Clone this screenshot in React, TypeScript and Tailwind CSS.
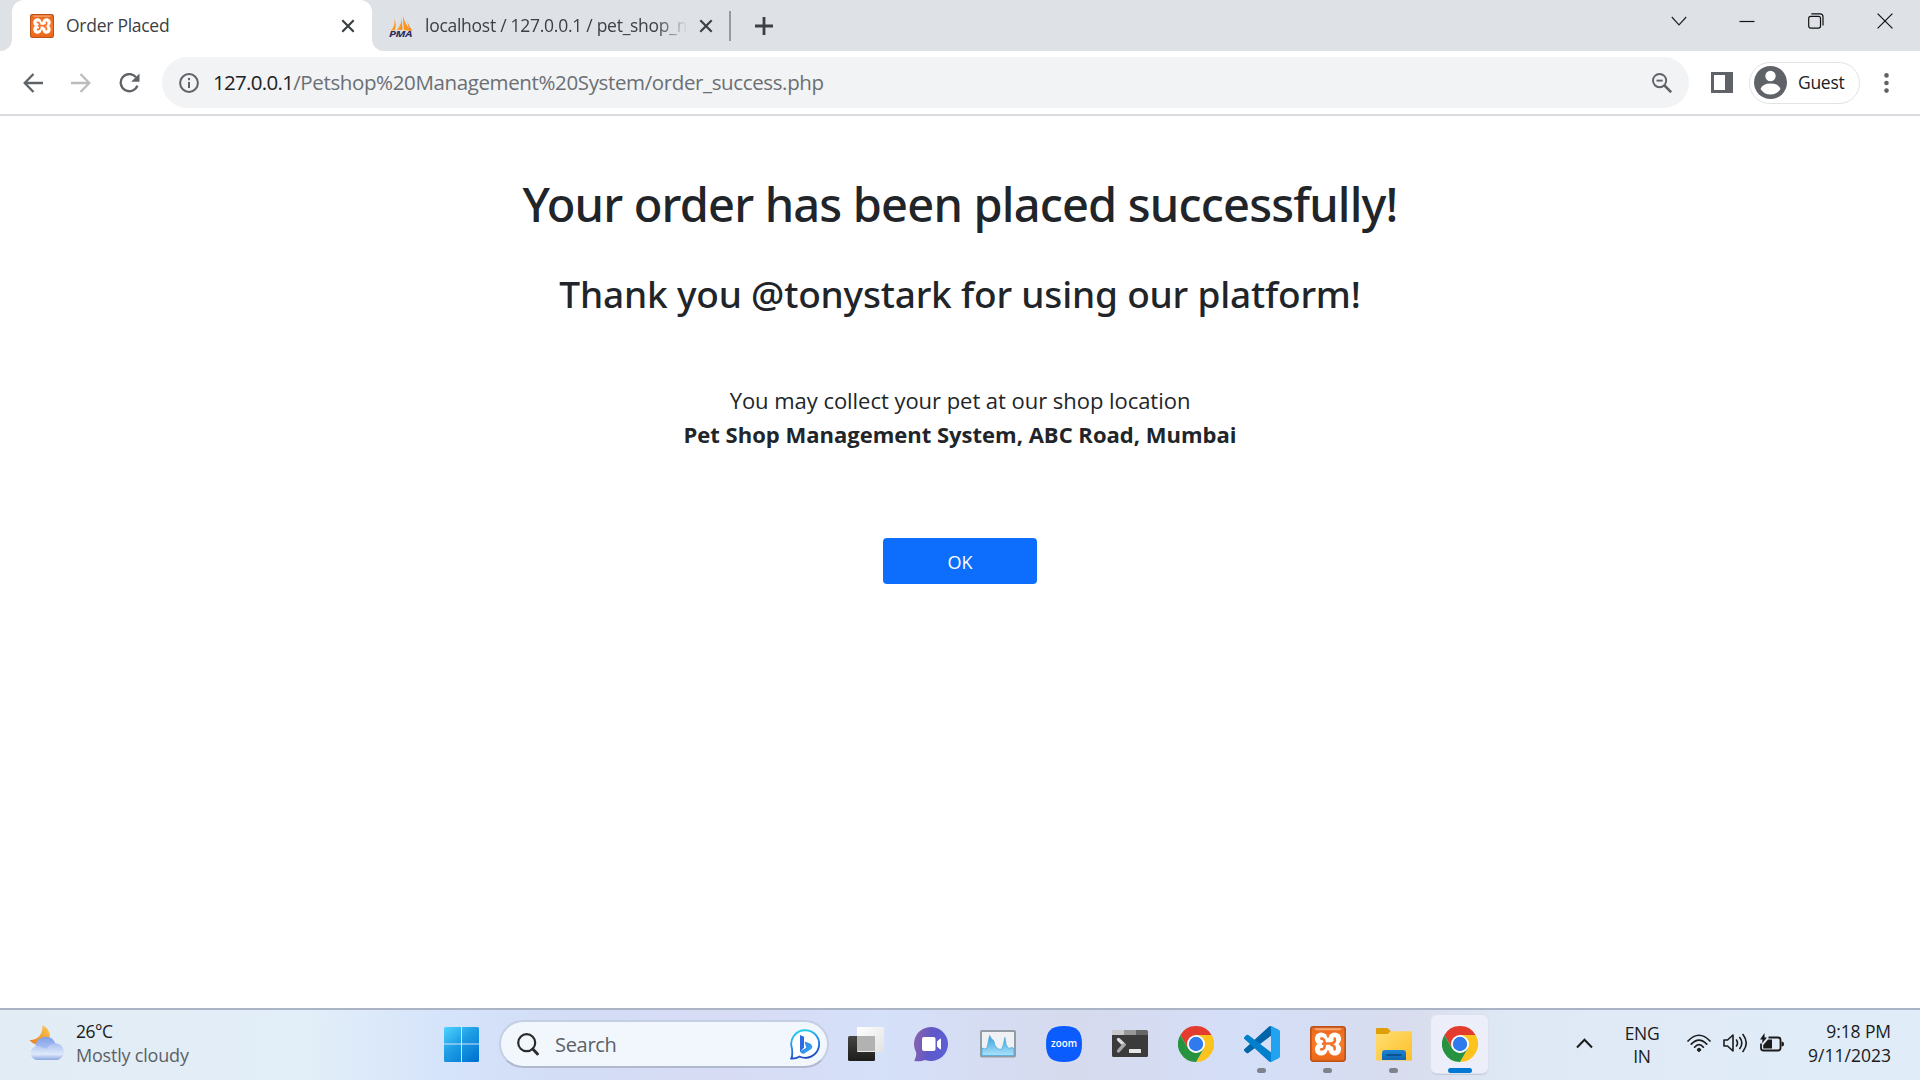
import React from "react";

const XamppIcon = ({ size, id }: { size: number; id: string }) => (
  <svg width={size} height={size} viewBox="0 0 36 36">
    <defs>
      <linearGradient id={id} x1="0" y1="0" x2="0" y2="1">
        <stop offset="0" stopColor="#e8681f" />
        <stop offset="0.5" stopColor="#fb7a24" />
        <stop offset="1" stopColor="#e9661a" />
      </linearGradient>
    </defs>
    <rect x="0.8" y="0.8" width="34.4" height="34.4" rx="2.6" fill={`url(#${id})`} stroke="#b9531a" strokeWidth="1.6" />
    <path d="M4 2.2h28l-2 2H6z" fill="#f7b98d" opacity="0.8" />
    <g fill="#fff">
      <circle cx="11.2" cy="12.8" r="6.3" />
      <circle cx="24.8" cy="12.8" r="6.3" />
      <circle cx="11.2" cy="23.2" r="6.3" />
      <circle cx="24.8" cy="23.2" r="6.3" />
      <rect x="9" y="11.5" width="18" height="13" />
    </g>
    <g stroke="#f5742a" strokeWidth="2.6" strokeLinecap="round" fill="none">
      <path d="M11.3 12.6q3.4 0 3.2 3.6M11.3 23.4q3.6 0 3.4-4M24.7 12.6q1 4-2.6 4.6M21.4 19q3.8.6 3.2 4.4M13 17.8l10-.6" />
      <path d="M18 8.6v2M18 25.4v2" strokeWidth="1.8" />
    </g>
  </svg>
);

const PmaIcon = () => (
  <svg width="24" height="24" viewBox="0 0 24 24" className="shrink-0 overflow-visible">
    <defs>
      <linearGradient id="sail" x1="0" y1="0" x2="1" y2="0.3">
        <stop offset="0" stopColor="#ffd9a4" />
        <stop offset="1" stopColor="#f98b12" />
      </linearGradient>
    </defs>
    <path d="M5.2 4.5C6 9 5.5 13 1.2 16.8l4.6-.6C7.2 12 6.8 8 5.2 4.5z" fill="url(#sail)" />
    <path d="M12.6.5C13.2 7 12 12 6.8 16.2l6.6-.4z" fill="url(#sail)" />
    <path d="M13.8 1.5l1 14.6 7.4 1C19 14 15.5 8 13.8 1.5z" fill="#fb9420" />
    <path d="M18.3 6.5c1 4 2.5 7 5.2 10.300l-3.500-.5z" fill="#f98b12" />
    <text x="0" y="23.3" textLength="23" lengthAdjust="spacingAndGlyphs" fontFamily="Open Sans, sans-serif" fontSize="8.8" fontWeight="700" fontStyle="italic" fill="#2b2b63">PMA</text>
  </svg>
);

const TabClose = () => (
  <svg width="14" height="14" viewBox="0 0 14 14" stroke="#3c4043" strokeWidth="2.200">
    <path d="M1.3 1.3l11.4 11.4M12.7 1.3L1.3 12.7" />
  </svg>
);

const ChromeIcon = () => (
  <svg width="36" height="36" viewBox="0 0 36 36">
    <path d="M18 9h15.590A18 18 0 0 1 18 36L25.8 22.5z" fill="#fcc31e" />
    <path d="M2.410 9A18 18 0 0 1 33.590 9H18l-7.800 13.500z" fill="#e33b2e" />
    <path d="M2.410 9L10.200 22.500 18 27l7.800-4.500L18 36A18 18 0 0 1 2.410 9z" fill="#27933f" />
    <circle cx="18" cy="18" r="9" fill="#fff" />
    <circle cx="18" cy="18" r="7.200" fill="#2f7bee" />
  </svg>
);

const VsCodeIcon = () => (
  <svg width="36" height="36" viewBox="0 0 100 100">
    <path d="M96.5 10.8L75.9.9a6.2 6.2 0 0 0-7.1 1.2L1.3 63.6a4.2 4.2 0 0 0 0 6.1l5.500 5a4.2 4.2 0 0 0 5.3.3L93.4 13.4a4.1 4.1 0 0 1 6.6 3.3v-.3a6.2 6.2 0 0 0-3.5-5.6z" fill="#0065a9" />
    <path d="M96.5 89.2l-20.6 9.900a6.2 6.2 0 0 1-7.1-1.2L1.3 36.4a4.2 4.2 0 0 1 0-6.1l5.5-5a4.2 4.2 0 0 1 5.3-.3l81.3 61.6a4.1 4.1 0 0 0 6.6-3.3v.3a6.2 6.2 0 0 1-3.5 5.6z" fill="#0080cc" />
    <path d="M75.9 99.1a6.2 6.2 0 0 1-7.1-1.2A3.7 3.7 0 0 0 75 95.3V4.7a3.7 3.7 0 0 0-6.2-2.6 6.2 6.2 0 0 1 7.1-1.2l20.6 9.900a6.2 6.2 0 0 1 3.5 5.6v67.2a6.2 6.2 0 0 1-3.5 5.6z" fill="#22a3f1" />
  </svg>
);

const TaskViewIcon = () => (
  <svg width="36" height="36" viewBox="0 0 36 36">
    <defs>
      <linearGradient id="tv" x1="0" y1="0" x2="0" y2="1">
        <stop offset="0" stopColor="#454543" />
        <stop offset="1" stopColor="#1d1d1c" />
      </linearGradient>
      <linearGradient id="tvl" x1="0" y1="0" x2="1" y2="1">
        <stop offset="0" stopColor="#fff" />
        <stop offset="1" stopColor="#e2e2e2" />
      </linearGradient>
    </defs>
    <rect x="0" y="10" width="27" height="25" rx="1.5" fill="url(#tv)" />
    <rect x="9" y="1" width="27" height="25" rx="1" fill="url(#tvl)" />
    <rect x="9" y="10" width="18" height="15" fill="#b2b2b2" />
  </svg>
);

const ChatIcon = () => (
  <svg width="36" height="36" viewBox="0 0 36 36">
    <defs>
      <linearGradient id="chat" x1="0" y1="0.3" x2="1" y2="0.5">
        <stop offset="0" stopColor="#8a62ac" />
        <stop offset="0.5" stopColor="#5f58c8" />
        <stop offset="1" stopColor="#5b5fd6" />
      </linearGradient>
    </defs>
    <path d="M17.5 1A17 17 0 1 1 11 33.9C8 35.2 4 35.2.8 35.2 0 35 .6 34 1.2 32.5 2 30.5 2.6 28.5 2 26A17 17 0 0 1 17.5 1z" fill="url(#chat)" />
    <rect x="8" y="11" width="13.5" height="14" rx="2" fill="#fff" />
    <path d="M23 15.5l3-2.7q1-.6 1 .6v9.2q0 1.2-1 .6l-3-2.7z" fill="#fff" />
  </svg>
);

const MonitorIcon = () => (
  <svg width="36" height="36" viewBox="0 0 36 36">
    <defs>
      <linearGradient id="mon" x1="0" y1="0" x2="0" y2="1">
        <stop offset="0" stopColor="#35a0dc" />
        <stop offset="1" stopColor="#a9e2fb" />
      </linearGradient>
    </defs>
    <rect x="1" y="5" width="34" height="25.5" rx="0.8" fill="#eff1f4" stroke="#929ca4" strokeWidth="2" />
    <path d="M2 22l2.5 1 2.5-1L9.6 9.5l2 3.5 2 1.5 1.6 5.5 3 3 3.3.5 1.8-4.5 1.6-7.5 1.3 7.5 2.6 3.5 3-1 2.2 1V29.5H2z" fill="url(#mon)" stroke="#4ea9dc" strokeWidth="0.8" />
  </svg>
);

const ZoomIcon = () => (
  <svg width="36" height="36" viewBox="0 0 36 36">
    <path d="M18 0C31 0 36 5 36 18S31 36 18 36 0 31 0 18 5 0 18 0z" fill="#0b5cff" />
    <text x="18" y="20.7" textAnchor="middle" textLength="26" lengthAdjust="spacingAndGlyphs" fontFamily="Open Sans, sans-serif" fontSize="10.5" fontWeight="600" fill="#fff">zoom</text>
  </svg>
);

const TerminalIcon = () => (
  <svg width="36" height="36" viewBox="0 0 36 36">
    <path d="M0 9h36v20.5a1.5 1.5 0 0 1-1.5 1.5h-33A1.5 1.5 0 0 1 0 29.5z" fill="#3b3b3b" />
    <path d="M1.5 4H12v5H0V5.5A1.5 1.5 0 0 1 1.5 4z" fill="#c9c9c9" />
    <path d="M12 4h12v5H12z" fill="#989898" />
    <path d="M24 4h10.5A1.5 1.5 0 0 1 36 5.5V9H24z" fill="#666" />
    <path d="M6.5 13.5l5.5 5.2" stroke="#dedede" strokeWidth="3.4" strokeLinecap="round" />
    <path d="M12 18.7L6.5 25" stroke="#a8a8a8" strokeWidth="3.4" strokeLinecap="round" />
    <rect x="17" y="23" width="12" height="4" rx="0.5" fill="#e6e6e6" />
  </svg>
);

const FolderIcon = () => (
  <svg width="36" height="36" viewBox="0 0 36 36">
    <defs>
      <linearGradient id="fol" x1="0" y1="0" x2="1" y2="1">
        <stop offset="0" stopColor="#ffdf73" />
        <stop offset="1" stopColor="#fdbf28" />
      </linearGradient>
      <linearGradient id="folb" x1="0" y1="0" x2="0" y2="1">
        <stop offset="0" stopColor="#1d84d6" />
        <stop offset="1" stopColor="#0f66b0" />
      </linearGradient>
    </defs>
    <path d="M0 3a1 1 0 0 1 1-1h10.5l3.5 3.2L12 8H0z" fill="#dfa007" />
    <path d="M0 8h12l3-2.800h20.500l.5.500v28.800H1a1 1 0 0 1-1-1z" fill="url(#fol)" />
    <path d="M6 34v-7q0-3 3-3h18q3 0 3 3v7z" fill="url(#folb)" />
    <path d="M11 29h14" stroke="#0a4a80" strokeWidth="1.6" strokeLinecap="round" />
  </svg>
);

const WindowsIcon = () => (
  <svg width="36" height="36" viewBox="0 0 36 36" className="shrink-0">
    <defs>
      <linearGradient id="win" gradientUnits="userSpaceOnUse" x1="0" y1="0" x2="30" y2="36">
        <stop offset="0" stopColor="#4fd4ff" />
        <stop offset="0.45" stopColor="#1f9fe6" />
        <stop offset="1" stopColor="#0072d0" />
      </linearGradient>
    </defs>
    <path d="M1.5 0H17v16.500H0V1.500Q0 0 1.500 0zM18 0h15.500Q35 0 35 1.500v15H18zM0 17.500h17V35H1.500Q0 35 0 33.500zM18 17.500h17v16q0 1.500-1.500 1.500H18z" fill="url(#win)" />
  </svg>
);

const WeatherIcon = () => (
  <svg width="37" height="36" viewBox="0 0 37 36" className="shrink-0">
    <defs>
      <linearGradient id="moon" x1="1" y1="0" x2="0" y2="1">
        <stop offset="0" stopColor="#f8cd55" />
        <stop offset="1" stopColor="#ec7a1a" />
      </linearGradient>
      <linearGradient id="c1" x1="0" y1="0" x2="0" y2="1">
        <stop offset="0" stopColor="#7f9fe6" />
        <stop offset="1" stopColor="#d3e0fb" />
      </linearGradient>
      <linearGradient id="c2" x1="0" y1="0" x2="0" y2="1">
        <stop offset="0" stopColor="#a9c0f0" />
        <stop offset="0.65" stopColor="#dfe9fb" />
        <stop offset="1" stopColor="#8aa6e3" />
      </linearGradient>
    </defs>
    <path d="M13.5.5C19 3 22 8 20.5 13.5 17 20 6 22.5.5 15 8 15.5 14 10 13.5.5z" fill="url(#moon)" />
    <path d="M6.5 20A10.5 10.5 0 0 1 26.5 18.5a8.300 8.300 0 0 1 2.500 16H12z" fill="url(#c1)" />
    <path d="M7.5 35a7 7 0 1 1 4.2-13.2Q15.500 24 18 23.500q2-5 9.500-5A8.400 8.400 0 0 1 28.500 35z" fill="url(#c2)" />
  </svg>
);

const BingIcon = () => (
  <svg width="30" height="31" viewBox="0 0 30 31">
    <defs>
      <linearGradient id="bing" x1="0.2" y1="0" x2="0.5" y2="1">
        <stop offset="0" stopColor="#1fd3ee" />
        <stop offset="0.5" stopColor="#2f8be8" />
        <stop offset="1" stopColor="#1a49ba" />
      </linearGradient>
      <linearGradient id="bb" x1="0" y1="0" x2="1" y2="1">
        <stop offset="0" stopColor="#2f6fe8" />
        <stop offset="1" stopColor="#35b6f2" />
      </linearGradient>
    </defs>
    <path d="M15.5 1.2A13.8 13.8 0 1 1 9.5 27.5Q6 29.8 1.3 29.5 2.8 27 2 19.5A13.8 13.8 0 0 1 15.5 1.2z" fill="#fff" stroke="url(#bing)" strokeWidth="1.9" />
    <path d="M10 6l4 1.7v10.800L10 23z" fill="#2b6be6" />
    <path d="M14.5 12.5l6 2.3q3.5 3.2.4 5.5L14 24.800Q11 25 10 22.500l6.300-3.700z" fill="url(#bb)" />
  </svg>
);

const TrayIcons = () => (
  <div className="flex items-center gap-3">
    <svg width="24" height="20" viewBox="0 0 24 20" fill="none" stroke="#1b1b1b" strokeWidth="1.7" strokeLinecap="round">
      <path d="M1 8Q12-3.500 23 8M4.300 11.200Q12 3.200 19.700 11.200M7.600 14.200Q12 9.200 16.400 14.200" />
      <circle cx="12" cy="16.800" r="1.600" fill="#1b1b1b" strokeWidth="1" />
    </svg>
    <svg width="25" height="20" viewBox="0 0 25 20" fill="none" stroke="#1b1b1b" strokeWidth="1.6" strokeLinecap="round" strokeLinejoin="round">
      <path d="M1 7h3.500L10 2v16l-5.500-5H1zM13.500 7q2 3 0 6M16.800 4.500q4 5.500 0 11M20 1.500q6.500 8.500 0 17" />
    </svg>
    <svg width="24" height="20" viewBox="0 0 24 20">
      <path d="M8.5 4.500H18a2.500 2.500 0 0 1 2.500 2.500v8a2.500 2.500 0 0 1-2.500 2.500H3.500A2.500 2.500 0 0 1 1 15v-4.500" fill="none" stroke="#1b1b1b" strokeWidth="1.8" />
      <path d="M21.500 8.500q2.500 0 2.500 2.500t-2.500 2.500zM12 6.500v9H3.200v-3.500L8 6.500z" fill="#1b1b1b" />
      <path d="M4.500 0L0 6.500h2.500L2 10.500 7 4.500H4.600z" fill="#1b1b1b" />
    </svg>
  </div>
);

const apps: { name: string; icon: React.ReactNode; running?: boolean; active?: boolean }[] = [
  { name: "Task view", icon: <TaskViewIcon /> },
  { name: "Chat", icon: <ChatIcon /> },
  { name: "Monitor", icon: <MonitorIcon /> },
  { name: "Zoom", icon: <ZoomIcon /> },
  { name: "Terminal", icon: <TerminalIcon /> },
  { name: "Chrome", icon: <ChromeIcon /> },
  { name: "VS Code", icon: <VsCodeIcon />, running: true },
  { name: "XAMPP", icon: <XamppIcon size={36} id="xl" />, running: true },
  { name: "Explorer", icon: <FolderIcon />, running: true },
  { name: "Chrome window", icon: <ChromeIcon />, active: true },
];

function TabStrip() {
  return (
    <div className="flex h-[51px] bg-[#dee1e6] text-[17.5px] leading-6 tracking-[-0.27px] text-[#3c4043]">
      <div className="w-3 bg-white">
        <div className="h-full rounded-br-xl bg-[#dee1e6]" />
      </div>
      <div className="flex w-[360px] items-center rounded-t-xl bg-white pr-[17px] pl-[18px]">
        <XamppIcon size={24} id="xs" />
        <span className="mb-px ml-3 flex-1">Order Placed</span>
        <TabClose />
      </div>
      <div className="flex-1 bg-white">
        <div className="flex h-full items-center rounded-bl-xl bg-[#dee1e6] pl-[17px]">
          <PmaIcon />
          <div className="mb-px ml-3 w-[263px] overflow-hidden whitespace-nowrap [mask-image:linear-gradient(to_right,black_88%,transparent)]">
            localhost / 127.0.0.1 / pet_shop_n
          </div>
          <div className="ml-[11px]"><TabClose /></div>
          <div className="ml-4 h-[30px] w-[2px] bg-[#96999e]" />
          <svg className="ml-6" width="18" height="18" viewBox="0 0 18 18" stroke="#3c4043" strokeWidth="2.8">
            <path d="M9 0v18M0 9h18" />
          </svg>
          <div className="mr-[17px] mb-[9px] ml-auto flex items-center">
            <svg width="16" height="10" viewBox="0 0 16 10" fill="none" stroke="#222" strokeWidth="1.2"><path d="M.8 1L8 8.8 15.2 1" /></svg>
            <svg className="ml-[52px]" width="16" height="16" viewBox="0 0 16 16"><path d="M0.5 8.500h15" stroke="#111" strokeWidth="1.200" /></svg>
            <svg className="ml-[53px]" width="16" height="16" viewBox="0 0 16 16" fill="none" stroke="#111" strokeWidth="1.2">
              <rect x="0.7" y="3.3" width="11.8" height="11.8" rx="2" />
              <path d="M3.3.8H12q3 0 3 3V12.5" />
            </svg>
            <svg className="mr-[10px] ml-[53px]" width="16" height="16" viewBox="0 0 16 16" stroke="#111" strokeWidth="1.2"><path d="M.6.6l14.8 14.8M15.4.6L.6 15.4" /></svg>
          </div>
        </div>
      </div>
    </div>
  );
}

function Toolbar() {
  return (
    <div className="flex h-[65px] items-center border-b-2 border-[#d9dbde] bg-white pl-[23px]">
      <svg width="20" height="20" viewBox="0 0 20 20" fill="none" stroke="#5f6368" strokeWidth="2.3"><path d="M20 10H2M10.5 1L1.7 10l8.8 9" /></svg>
      <svg className="ml-[28px]" width="20" height="20" viewBox="0 0 20 20" fill="none" stroke="#babcbe" strokeWidth="2.3"><path d="M0 10h18M9.5 1l8.8 9-8.8 9" /></svg>
      <svg className="ml-[28px]" width="22" height="20" viewBox="0 0 22 20">
        <path d="M17 4.2A8.600 8.600 0 1 0 18.400 12.600" fill="none" stroke="#5f6368" strokeWidth="2.3" />
        <path d="M20.5.5v8.300h-8.300z" fill="#5f6368" />
      </svg>
      <div className="ml-[21px] flex h-[51px] w-[1527px] items-center rounded-full bg-[#f1f3f4] pr-[17px] pl-[17px]">
        <svg width="20" height="20" viewBox="0 0 20 20" fill="none" stroke="#5f6368" strokeWidth="2"><circle cx="10" cy="10" r="8.9" /><path d="M10 9v6M10 5v2.200" /></svg>
        <div className="mb-[2px] ml-[14px] flex-1 text-[20.5px] leading-7 tracking-[-0.37px] whitespace-nowrap text-[#6b6f74]">
          <span className="tracking-[-0.7px] text-[#202124]">127.0.0.1</span>/Petshop%20Management%20System/order_success.php
        </div>
        <svg width="20" height="20" viewBox="0 0 20 20" fill="none" stroke="#5f6368" strokeWidth="1.9"><circle cx="7.6" cy="7.6" r="6.6" /><path d="M4.5 7.600h6.200" /><path d="M12.500 12.500l6.700 6.700" strokeWidth="2.600" /></svg>
      </div>
      <svg className="ml-[22px]" width="22" height="21" viewBox="0 0 22 21"><path fillRule="evenodd" d="M0 0h22v21H0zM3 3v15h11V3z" fill="#5f6368" /></svg>
      <div className="ml-4 flex h-[42px] w-[111px] items-center rounded-full border-[1.5px] border-[#e1e3e6] pl-1">
        <svg width="33" height="33" viewBox="0 0 33 33">
          <circle cx="16.5" cy="16.5" r="16.5" fill="#5f6368" />
          <circle cx="16.5" cy="10" r="5.2" fill="#fff" />
          <path d="M6.5 23q2-5.500 10-5.500t10 5.500q-3.500 5.500-10 5.500T6.500 23z" fill="#fff" />
        </svg>
        <span className="mb-px ml-[11px] text-[17.5px] leading-6 tracking-[-0.3px] text-[#202124]">Guest</span>
      </div>
      <svg className="ml-6" width="5" height="20" viewBox="0 0 5 20" fill="#5f6368"><circle cx="2.5" cy="2.4" r="2.3" /><circle cx="2.5" cy="10" r="2.3" /><circle cx="2.5" cy="17.6" r="2.3" /></svg>
    </div>
  );
}

function Taskbar() {
  return (
    <div className="flex h-[72px] items-center border-t-2 border-[#aab4c4] bg-[linear-gradient(to_right,#e2ecf5_0%,#e2eef8_16%,#d5e3fb_23.5%,#d3ddf6_29%,#d7dcf4_38%,#d5e0f9_46%,#d6daed_56%,#d4dff8_65%,#d8dcee_73%,#dfe9f5_79%,#e0edf9_100%)] text-[17.5px] leading-6 text-[#1b1b1b]">
      <div className="flex w-[444px] items-center pb-1 pl-[29px]">
        <WeatherIcon />
        <div className="ml-[10px]">
          <div className="tracking-[-0.5px]">26°C</div>
          <div className="text-[18px] tracking-[-0.2px] text-[#5c6166]">Mostly cloudy</div>
        </div>
      </div>
      <WindowsIcon />
      <div className="mr-1 mb-[2px] ml-[19px] flex h-12 w-[330px] items-center rounded-full border-2 border-[#c5cfe4] border-b-[#b0b9cf] bg-[#f2f6fd] pr-[7px] pl-4">
        <svg width="22" height="23" viewBox="0 0 22 23" fill="none" stroke="#2b2b2b" strokeLinecap="round"><circle cx="9.7" cy="9.7" r="8.5" strokeWidth="2.2" /><path d="M15.8 16l4.700 5" strokeWidth="2.8" /></svg>
        <span className="ml-4 flex-1 pt-px text-[20px] tracking-[-0.3px] text-[#5b5f66]">Search</span>
        <BingIcon />
      </div>
      <div className="flex h-full">
        {apps.map((a) => (
          <div key={a.name} className="flex w-[66px] justify-center pt-[5px] pr-px">
            <div className={a.active ? "flex h-[58px] w-[57px] flex-col items-center rounded-md bg-[#eceff9] pt-[11px] shadow-[0_0_0_1px_#dde1ee,0_2px_1px_#c3c9d8]" : "flex h-[58px] w-[57px] flex-col items-center pt-[11px]"}>
              {a.icon}
              {a.running && <div className="mt-[6px] h-[5px] w-[9px] rounded-full bg-[#7d828b]" />}
              {a.active && <div className="mt-[6px] h-[5px] w-6 rounded-full bg-[#0078d4]" />}
            </div>
          </div>
        ))}
      </div>
      <div className="flex flex-1 items-center pr-[29px] pb-1 pl-[83px]">
        <svg className="mr-[31px]" width="17" height="11" viewBox="0 0 17 11" fill="none" stroke="#1b1b1b" strokeWidth="2"><path d="M1 9.500l7.500-7.700L16 9.500" /></svg>
        <div className="mt-[3px] w-9 text-center leading-[23px] tracking-[-0.3px]">ENG<br />IN</div>
        <div className="ml-[27px]"><TrayIcons /></div>
        <div className="ml-auto text-right">
          <div className="tracking-[-0.1px]">9:18 PM</div>
          <div>9/11/2023</div>
        </div>
      </div>
    </div>
  );
}

export default function App() {
  return (
    <div className="flex h-[1080px] w-[1920px] flex-col overflow-hidden bg-white font-['Open_Sans',sans-serif]">
      <TabStrip />
      <Toolbar />
      <main className="flex flex-1 flex-col items-center text-[#212529]">
        <h1 className="mt-[58px] font-['Noto_Sans',sans-serif] text-[47px] leading-[60px] font-medium tracking-[-0.82px]">
          Your order has been placed successfully!
        </h1>
        <h2 className="mt-[37px] font-['Noto_Sans',sans-serif] text-[37px] leading-[46px] font-medium tracking-[-0.19px]">
          Thank you @tonystark for using our platform!
        </h2>
        <p className="mt-[66px] text-center text-[22px] leading-[34px]">
          <span className="tracking-[-0.04px]">You may collect your pet at our shop location</span>
          <br />
          <b>Pet Shop Management System, ABC Road, Mumbai</b>
        </p>
        <button className="mt-[87px] h-[46px] w-[154px] rounded bg-[#0d6efd] pt-[2px] text-[18px] leading-6 text-white">OK</button>
      </main>
      <Taskbar />
    </div>
  );
}
